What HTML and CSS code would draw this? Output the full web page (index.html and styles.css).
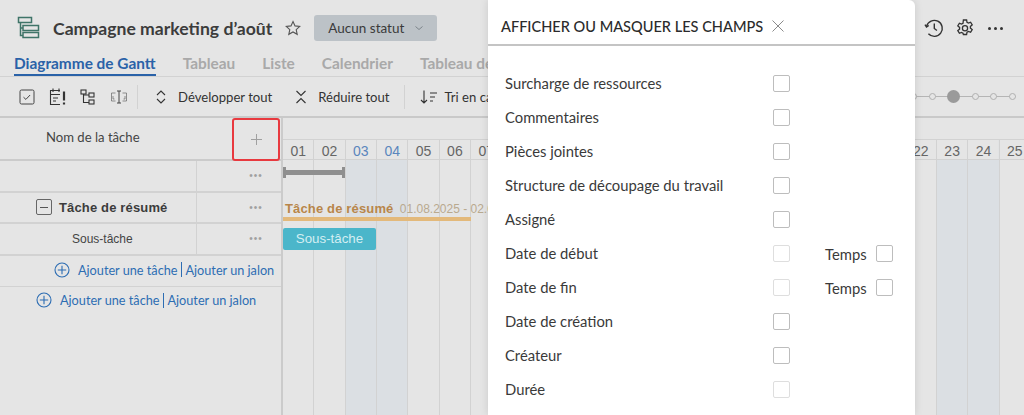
FILE: index.html
```html
<!DOCTYPE html>
<html lang="fr">
<head>
    <meta charset="UTF-8">
    <title>Campagne marketing d'août</title>
    <link rel="stylesheet" href="styles.css">
</head>
<body>
    <div class="app">
        <div class="titlebar">
            <svg class="logo" width="24" height="24" viewBox="0 0 24 24" fill="none" stroke="#3f7468" stroke-width="1.5">
                <rect x="1.5" y="1.5" width="13" height="5"/>
                <rect x="6" y="9.5" width="15.5" height="5"/>
                <rect x="6" y="16.5" width="15.5" height="5"/>
                <path d="M3.5 6.5v13h2.5M3.5 12h2.5"/>
            </svg>
            <h1 class="title">Campagne marketing d’août</h1>
            <svg class="star" width="16" height="16" viewBox="0 0 16 16" fill="none" stroke="#555" stroke-width="1.1">
                <path d="M8 1.5l2 4.4 4.7.5-3.5 3.2 1 4.7L8 11.9l-4.2 2.4 1-4.7-3.5-3.2 4.7-.5z"/>
            </svg>
            <div class="status">
                <span>Aucun statut</span>
                <svg width="10" height="6" viewBox="0 0 10 6" fill="none" stroke="#7d858b" stroke-width="1"><path d="M1.5 1.5L5 4.5l3.5-3"/></svg>
            </div>
            <div class="top-actions">
                <svg width="20" height="20" viewBox="0 0 20 20" fill="none" stroke="#333" stroke-width="1.4">
                    <path d="M2.6 8.2A8 8 0 1 1 4.4 15.8"/>
                    <path d="M1 6.6l1.5 2.4 2.3-1.5"/>
                    <path d="M10.3 5.5v5l2.6 2"/>
                </svg>
                <svg width="18" height="18" viewBox="0 0 18 18" fill="none" stroke="#333" stroke-width="1.3">
                    <path d="M7.4 1h3.2l.4 2.3 1.5.8 2.1-.9 1.6 2.7-1.8 1.5v1.7l1.8 1.5-1.6 2.7-2.1-.9-1.5.8-.4 2.3H7.4L7 14.2l-1.5-.8-2.1.9-1.6-2.7L3.6 10.1V8.4L1.8 6.9l1.6-2.7 2.1.9L7 4.3z"/>
                    <circle cx="9" cy="9.2" r="2.6"/>
                </svg>
                <div class="more"><i></i><i></i><i></i></div>
            </div>
        </div>

        <div class="tabs">
            <a class="tab active">Diagramme de Gantt</a>
            <a class="tab">Tableau</a>
            <a class="tab">Liste</a>
            <a class="tab">Calendrier</a>
            <a class="tab">Tableau de</a>
        </div>

        <div class="toolbar">
            <div class="tool-icons">
                <svg width="16" height="16" viewBox="0 0 16 16" fill="none" stroke="#444" stroke-width="1"><rect x="1" y="1" width="14" height="14" rx="1.5"/><path d="M4.5 8.2l2.4 2.2 4.2-4.4"/></svg>
                <svg width="18" height="20" viewBox="0 0 18 20" fill="none" stroke="#333" stroke-width="1.1"><path d="M11 3.5H1.5v14H11M1.5 7.5H11M4 1.5v3.5M10 1.5v3.5M4 11h5M4 14h3"/><path d="M15 4.5v9" stroke-width="2.2"/><path d="M15 15.5v2" stroke-width="2.2"/></svg>
                <svg width="16" height="16" viewBox="0 0 16 16" fill="none" stroke="#333" stroke-width="1.1"><rect x="1" y="1" width="5" height="4"/><rect x="9" y="4" width="5" height="4"/><rect x="9" y="11" width="5" height="4"/><path d="M3.5 5v8.5H9M3.5 6H9"/></svg>
                <svg width="18" height="16" viewBox="0 0 18 16" fill="none" stroke="#666" stroke-width="1"><path d="M7 2h4M7 14h4M9 2v12" stroke="#444"/><path d="M5.5 4H1.5v8h4M12.5 4h4v8h-4" stroke-width=".7"/><path d="M3 7v3h1.5M15 7v3h-1.5" stroke-width=".7"/></svg>
            </div>
            <span class="tool-sep"></span>
            <button class="tool-btn">
                <svg width="12" height="16" viewBox="0 0 12 16" fill="none" stroke="#333" stroke-width="1.1"><path d="M2 6l4-4 4 4M2 10l4 4 4-4"/></svg>
                Développer tout
            </button>
            <button class="tool-btn">
                <svg width="12" height="16" viewBox="0 0 12 16" fill="none" stroke="#333" stroke-width="1.1"><path d="M1.5 2L6 6.5 10.5 2M1.5 14L6 9.500l4.500 4.500"/></svg>
                Réduire tout
            </button>
            <span class="tool-sep"></span>
            <button class="tool-btn tool-sort">
                <svg width="18" height="16" viewBox="0 0 18 16" fill="none" stroke="#333" stroke-width="1.1"><path d="M4 1.500v12.500M1 11l3 3 3-3M10 4h7M10 8h5M10 12h3"/></svg>
                Tri en ca
            </button>
            <div class="zoom-slider">
                <i class="stop"></i><i class="stop"></i><i class="stop big"></i><i class="stop"></i><i class="stop"></i><i class="stop"></i>
            </div>
        </div>

        <div class="gantt">
            <div class="task-panel">
                <div class="task-head">
                    <span class="task-head-name">Nom de la tâche</span>
                    <span class="add-col">
                        <svg width="11" height="11" viewBox="0 0 11 11" fill="none" stroke="#a0a0a0" stroke-width="1"><path d="M5.500 0v11M0 5.500h11"/></svg>
                    </span>
                </div>
                <div class="task-row">
                    <span class="task-name"></span>
                    <span class="task-menu">•••</span>
                </div>
                <div class="task-row">
                    <span class="task-name summary"><i class="collapse"></i>Tâche de résumé</span>
                    <span class="task-menu">•••</span>
                </div>
                <div class="task-row">
                    <span class="task-name sub">Sous-tâche</span>
                    <span class="task-menu">•••</span>
                </div>
                <div class="add-row nested">
                    <svg width="16" height="16" viewBox="0 0 16 16" fill="none" stroke="#2d6db3" stroke-width="1.1"><circle cx="8" cy="8" r="7"/><path d="M8 3.800v8.400M3.800 8h8.400"/></svg>
                    <span>Ajouter une tâche</span><b></b><span>Ajouter un jalon</span>
                </div>
                <div class="add-row">
                    <svg width="16" height="16" viewBox="0 0 16 16" fill="none" stroke="#2d6db3" stroke-width="1.1"><circle cx="8" cy="8" r="7"/><path d="M8 3.800v8.400M3.800 8h8.400"/></svg>
                    <span>Ajouter une tâche</span><b></b><span>Ajouter un jalon</span>
                </div>
            </div>

            <div class="timeline">
                <div class="day-cols">
                    <div class="day">01</div>
                    <div class="day">02</div>
                    <div class="day off">03</div>
                    <div class="day off">04</div>
                    <div class="day">05</div>
                    <div class="day">06</div>
                    <div class="day">07</div>
                    <div class="day-gap"></div>
                    <div class="day">22</div>
                    <div class="day shade">23</div>
                    <div class="day shade">24</div>
                    <div class="day">25</div>
                </div>
                <div class="bars">
                    <div class="bar-row">
                        <div class="group-bar"></div>
                    </div>
                    <div class="bar-row">
                        <div class="summary-bar">
                            <span class="summary-label"><b>Tâche de résumé</b> 01.08.2025 - 02.0</span>
                        </div>
                    </div>
                    <div class="bar-row">
                        <div class="task-bar">Sous-tâche</div>
                    </div>
                </div>
            </div>
        </div>

        <div class="fields-dialog">
            <div class="dialog-head">
                <h2>Afficher ou masquer les champs</h2>
                <svg width="14" height="14" viewBox="0 0 14 14" fill="none" stroke="#8a8a8a" stroke-width="1"><path d="M1.500 1.500l11 11M12.500 1.500l-11 11"/></svg>
            </div>
            <div class="field-list">
                <div class="field"><span class="field-label">Surcharge de ressources</span><i class="check"></i></div>
                <div class="field"><span class="field-label">Commentaires</span><i class="check"></i></div>
                <div class="field"><span class="field-label">Pièces jointes</span><i class="check"></i></div>
                <div class="field"><span class="field-label">Structure de découpage du travail</span><i class="check"></i></div>
                <div class="field"><span class="field-label">Assigné</span><i class="check"></i></div>
                <div class="field"><span class="field-label">Date de début</span><i class="check off"></i><span class="field-extra">Temps</span><i class="check"></i></div>
                <div class="field"><span class="field-label">Date de fin</span><i class="check off"></i><span class="field-extra">Temps</span><i class="check"></i></div>
                <div class="field"><span class="field-label">Date de création</span><i class="check"></i></div>
                <div class="field"><span class="field-label">Créateur</span><i class="check"></i></div>
                <div class="field"><span class="field-label">Durée</span><i class="check off"></i></div>
                <div class="field"><span class="field-label"></span><i class="check off"></i></div>
            </div>
        </div>
    </div>
</body>
</html>
```

FILE: styles.css
```css
* {
    box-sizing: border-box;
}
body {
    margin: 0;
    font-family: Lato, "Noto Sans", sans-serif;
    color: #333;
    background: #e5e5e5;
}
.app {
    position: relative;
    width: 1024px;
    height: 415px;
    overflow: hidden;
    display: flex;
    flex-direction: column;
    background: #e5e5e5;
}

/* title row */
.titlebar {
    height: 50px;
    flex: none;
    display: flex;
    align-items: center;
    padding: 6px 8px 0 17px;
}
.logo {
    margin-right: 12px;
}
.title {
    margin: 0;
    font-size: 17.600px;
    font-weight: 700;
    color: #3c3c3c;
    white-space: nowrap;
}
.star {
    margin-left: 13px;
}
.status {
    width: 123px;
    height: 26px;
    margin-left: 13px;
    padding: 0 13px 0 14px;
    display: flex;
    align-items: center;
    justify-content: space-between;
    font-size: 13.500px;
    color: #3a3a3a;
    background: #bcc2c7;
    border-radius: 3px;
}
.top-actions {
    margin-left: auto;
    display: flex;
    align-items: center;
    gap: 12px;
    padding-right: 13px;
}
.more {
    display: flex;
    gap: 3px;
    margin-left: 2px;
}
.more i {
    width: 3px;
    height: 3px;
    border-radius: 50%;
    background: #333;
}

/* tabs */
.tabs {
    height: 27px;
    flex: none;
    display: flex;
    gap: 27px;
    padding-left: 14px;
    border-bottom: 1px solid #d2d2d2;
    white-space: nowrap;
}
.tab {
    height: 26px;
    line-height: 26px;
    font-size: 15.400px;
    font-weight: 700;
    color: #a9a9a9;
}
.tab.active {
    color: #2a62a8;
    border-bottom: 2px solid #2a62a8;
}

/* toolbar */
.toolbar {
    height: 41px;
    flex: none;
    display: flex;
    align-items: center;
    padding: 0 8px 0 19px;
    border-bottom: 2px solid #c9c9c9;
}
.tool-icons {
    display: flex;
    align-items: center;
    gap: 13.700px;
}
.tool-sep {
    width: 1px;
    height: 24px;
    margin: 0 17px 0 9px;
    background: #d2d2d2;
}
.tool-btn {
    display: flex;
    align-items: center;
    gap: 11px;
    margin-right: 23px;
    padding: 0;
    border: 0;
    background: none;
    font-family: inherit;
    font-size: 13.100px;
    color: #333;
    white-space: nowrap;
}
.tool-btn + .tool-sep {
    margin-left: -9px;
}
.tool-sort {
    margin-left: -2px;
    gap: 7px;
}
.zoom-slider {
    margin-left: auto;
    width: 106px;
    flex: none;
    display: flex;
    align-items: center;
    justify-content: space-between;
    background: linear-gradient(#b5b5b5, #b5b5b5) center / 100% 1px no-repeat;
}
.stop {
    width: 7px;
    height: 7px;
    border: 1px solid #b0b0b0;
    border-radius: 50%;
    background: #e5e5e5;
}
.stop.big {
    width: 13px;
    height: 13px;
    border: 0;
    background: #9a9a9a;
}

/* gantt */
.gantt {
    flex: 1;
    display: flex;
    min-height: 0;
}
.task-panel {
    width: 283px;
    flex: none;
    border-right: 2px solid #cbcbcb;
}
.task-head {
    height: 43px;
    display: flex;
    border-bottom: 2px solid #cbcbcb;
    font-size: 13.100px;
    color: #444;
}
.task-head-name {
    flex: 1;
    padding: 11px 0 0 46px;
}
.add-col {
    width: 48px;
    margin-right: 1px;
    height: 43px;
    display: flex;
    align-items: center;
    justify-content: center;
    border: 2px solid #e8393f;
    border-radius: 3px;
}
.task-row {
    height: 31.500px;
    display: flex;
    border-bottom: 2px solid #d2d2d2;
}
.task-name {
    width: 197px;
    display: flex;
    align-items: center;
    border-right: 1px solid #d2d2d2;
    font-family: "Liberation Sans", Arial, sans-serif;
    font-size: 12px;
    color: #444;
}
.summary {
    padding-left: 36px;
    font-size: 13px;
    font-weight: 700;
    letter-spacing: .15px;
    color: #3c3c3c;
}
.sub {
    padding-left: 72px;
}
.collapse {
    position: relative;
    width: 16px;
    height: 16px;
    margin-right: 7px;
    border: 1px solid #666;
    border-radius: 2px;
}
.collapse::after {
    content: "";
    position: absolute;
    left: 3px;
    right: 3px;
    top: 6.500px;
    height: 1px;
    background: #555;
}
.task-menu {
    flex: 1;
    padding-left: 34px;
    display: flex;
    align-items: center;
    justify-content: center;
    font-family: "Liberation Sans", Arial, sans-serif;
    font-size: 10px;
    letter-spacing: 1px;
    color: #a0a0a0;
}
.add-row {
    height: 26px;
    display: flex;
    align-items: center;
    padding-left: 36px;
    font-size: 12.700px;
    color: #2d6db3;
    white-space: nowrap;
}
.add-row.nested {
    height: 31.500px;
    padding: 0 0 2px 54px;
    border-bottom: 1px solid #d2d2d2;
}
.add-row svg {
    margin-right: 8px;
}
.add-row b {
    width: 1px;
    height: 15px;
    margin: 0 3.500px;
    background: #2d6db3;
}
.timeline {
    position: relative;
    flex: none;
    width: 748px;
}
.day-cols {
    height: 100%;
    display: flex;
    padding-top: 21px;
}
.day {
    width: 31.350px;
    flex: none;
    padding-top: 2px;
    height: 100%;
    text-align: center;
    border-top: 1px solid #d2d2d2;
    border-right: 1px solid #d2d2d2;
    font-family: "Liberation Sans", Arial, sans-serif;
    font-size: 14px;
    line-height: 18px;
    color: #666;
}
.day.off {
    color: #5b86bd;
    background: linear-gradient(#e5e5e5, #e5e5e5) top / 100% 20px no-repeat, #dbdfe3;
}
.day.shade {
    background: linear-gradient(#e5e5e5, #e5e5e5) top / 100% 20px no-repeat, #dbdfe3;
}
.day-gap {
    flex: 1;
}
.bars {
    position: absolute;
    top: 41px;
    left: 0;
    right: 0;
    border-top: 1px solid #d2d2d2;
}
.bar-row {
    height: 31.500px;
    position: relative;
}
.group-bar {
    position: absolute;
    left: 0;
    top: 7px;
    width: 62px;
    height: 11px;
    border: solid #8f8f8f;
    border-width: 0 3px;
    background: linear-gradient(#8f8f8f, #8f8f8f) center / 100% 5px no-repeat;
}
.summary-bar {
    position: absolute;
    left: 0;
    top: 25px;
    width: 188px;
    height: 4px;
    background: #e3b97b;
}
.summary-label {
    position: absolute;
    left: 2px;
    bottom: 5px;
    font-family: "Liberation Sans", Arial, sans-serif;
    font-size: 12px;
    color: #b9a98f;
    white-space: nowrap;
}
.summary-label b {
    margin-right: 3px;
    font-size: 13px;
    letter-spacing: .15px;
    color: #b8864a;
}
.task-bar {
    position: absolute;
    left: 0;
    top: 5px;
    width: 93px;
    height: 22px;
    border-radius: 2px;
    text-align: center;
    line-height: 22px;
    font-family: "Liberation Sans", Arial, sans-serif;
    font-size: 13.300px;
    color: #d4eef2;
    background: #4bb6ca;
}

/* dialog over the page */
.fields-dialog {
    position: absolute;
    top: 0;
    bottom: 0;
    left: 488px;
    width: 427px;
    background: #fff;
    border-top-right-radius: 6px;
    box-shadow: 0 0 8px rgba(0, 0, 0, .12);
}
.dialog-head {
    height: 46px;
    display: flex;
    align-items: center;
    gap: 8px;
    padding: 8px 0 0 13px;
    border-bottom: 2px solid #c4c4c4;
}
.dialog-head h2 {
    margin: 0;
    font-size: 14.550px;
    font-weight: 500;
    color: #2b2b2b;
    text-transform: uppercase;
    white-space: nowrap;
}
.field-list {
    padding: 20.500px 0 0 17px;
}
.field {
    height: 34px;
    display: flex;
    align-items: center;
    font-size: 14.800px;
    color: #3a3a3a;
}
.field-label {
    width: 268px;
    flex: none;
    padding-bottom: 2px;
    white-space: nowrap;
}
.field-extra {
    margin: 0 9px 0 35px;
}
.check {
    width: 17px;
    height: 17px;
    flex: none;
    border: 1px solid #bdbdbd;
    border-radius: 2px;
}
.check.off {
    border-color: #dedede;
}
```
